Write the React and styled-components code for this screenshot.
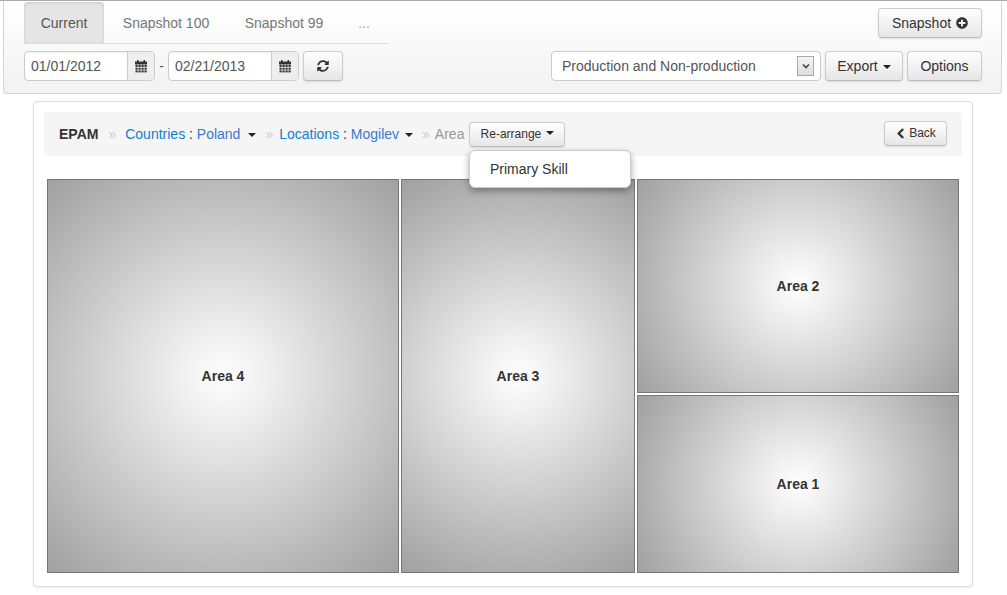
import React from 'react';
import styled, { createGlobalStyle } from 'styled-components';
import { FaSyncAlt, FaPlusCircle, FaChevronLeft } from 'react-icons/fa';

const GlobalStyle = createGlobalStyle`
  html, body {
    margin: 0;
    padding: 0;
    background: #fff;
    font-family: "Liberation Sans", Arial, sans-serif;
    font-size: 14px;
    color: #333;
  }
  * { box-sizing: border-box; }
`;

const Page = styled.div`
  width: 1007px;
  height: 595px;
  overflow: hidden;
  border-top: 1px solid #aaa;
  padding: 0 5px 0 3px;
`;

const Header = styled.header`
  height: 93px;
  border: 1px solid #d4d4d4;
  border-top: 0;
  border-radius: 0 0 4px 4px;
  background: linear-gradient(to bottom, #fff, #f2f2f2);
  padding: 1px 19px 0 20px;
  display: flex;
  flex-direction: column;
`;

const TopRow = styled.div`
  display: flex;
  justify-content: space-between;
  align-items: flex-start;
  height: 49px;
`;

const Tabs = styled.nav`
  display: flex;
  width: 364px;
  height: 42px;
  border-bottom: 1px solid #ddd;
`;

const Tab = styled.a`
  display: flex;
  align-items: center;
  justify-content: center;
  width: ${p => p.$w}px;
  height: 41px;
  color: ${p => (p.$active ? '#555' : '#777')};
  background: ${p => (p.$active ? '#e5e5e5' : 'transparent')};
  box-shadow: ${p => (p.$active ? 'inset 0 1px 3px rgba(0,0,0,.12)' : 'none')};
  border-radius: 4px 4px 0 0;
`;

const Ellipsis = styled(Tab)`
  color: #aaa;
`;

const SnapshotButtonWrap = styled.div`
  margin-top: 6px;
`;

const BottomRow = styled.div`
  display: flex;
  justify-content: space-between;
  align-items: flex-start;
`;

const Group = styled.div`
  display: flex;
  align-items: center;
  gap: ${p => p.$gap ?? 4}px;
`;

const DateBox = styled.div`
  display: flex;
  width: 131px;
  height: 30px;
  border: 1px solid #ccc;
  border-radius: 4px;
  overflow: hidden;
  background: #fff;
  box-shadow: inset 0 1px 1px rgba(0,0,0,.07);
`;

const DateText = styled.div`
  flex: 1;
  padding-left: 6px;
  line-height: 28px;
  color: #555;
`;

const Addon = styled.div`
  width: 27px;
  display: flex;
  align-items: center;
  justify-content: center;
  background: #eee;
  border-left: 1px solid #ccc;
`;

const Dash = styled.span`
  width: 13px;
  text-align: center;
  color: #555;
`;

const Button = styled.button`
  display: inline-flex;
  align-items: center;
  justify-content: center;
  gap: ${p => p.$gap ?? 5}px;
  width: ${p => p.$w}px;
  height: ${p => p.$h ?? 30}px;
  padding: 0;
  border: 1px solid #ccc;
  border-bottom-color: #bbb;
  border-radius: 4px;
  background: linear-gradient(to bottom, #fff, #e6e6e6);
  box-shadow: 0 1px 2px rgba(0,0,0,.1);
  font-family: inherit;
  font-size: ${p => p.$size ?? 14}px;
  color: #333;
`;

const Caret = styled.span`
  display: inline-block;
  width: 0;
  height: 0;
  border-top: 4px solid #222;
  border-left: 4px solid transparent;
  border-right: 4px solid transparent;
  margin-top: ${p => p.$up ?? 1}px;
  margin-left: ${p => p.$left ?? 0}px;
`;

const SelectBox = styled.div`
  width: 270px;
  height: 30px;
  border: 1px solid #ccc;
  border-radius: 4px;
  background: #fff;
  display: flex;
  align-items: center;
  justify-content: space-between;
  padding: 0 2px 0 10px;
  color: #555;
`;

const SelectArrow = styled.span`
  width: 17px;
  height: 20px;
  border: 1px solid #aaa;
  background: linear-gradient(to bottom, #f4f4f4, #ddd);
  display: flex;
  align-items: center;
  justify-content: center;
  margin-right: 4px;
`;

const Panel = styled.main`
  width: 940px;
  height: 486px;
  margin: 7px 0 0 30px;
  border: 1px solid #ddd;
  border-radius: 4px;
  box-shadow: 0 1px 2px rgba(0,0,0,.08);
  padding: 10px;
`;

const Breadcrumb = styled.div`
  position: relative;
  height: 44px;
  background: #f5f5f5;
  border-radius: 4px;
  display: flex;
  align-items: center;
  padding: 0 15px;
`;

const Root = styled.strong`
  color: #333;
`;

const Sep = styled.span`
  color: #ccc;
  margin: 0 ${p => p.$right ?? 10}px 0 ${p => p.$left ?? 10}px;
`;

const Crumb = styled.span`
  color: #333;
  display: inline-flex;
  align-items: center;
  white-space: pre;
`;

const Link = styled.a`
  color: #0f7fd0;
`;

const Value = styled.a`
  color: #3a79d0;
`;

const Current = styled.span`
  color: #999;
  margin-right: 5px;
`;

const BackWrap = styled.div`
  margin: 0 0 2px auto;
`;

const BackIcon = styled(FaChevronLeft)`
  stroke: currentColor;
  stroke-width: 40px;
`;

const Menu = styled.div`
  position: absolute;
  left: 425px;
  top: 38px;
  width: 162px;
  height: 38px;
  background: #fff;
  border: 1px solid #ccc;
  border-radius: 6px;
  box-shadow: 0 3px 7px rgba(0,0,0,.35);
  z-index: 2;
  padding-left: 20px;
  line-height: 36px;
  color: #333;
`;

const Treemap = styled.div`
  display: grid;
  grid-template-columns: 352px 234px 322px;
  grid-template-rows: 214px 178px;
  gap: 2px;
  margin: 23px 0 0 3px;
`;

const Cell = styled.div`
  grid-row: ${p => p.$row};
  grid-column: ${p => p.$col};
  border: 1px solid #777;
  background: radial-gradient(circle farthest-corner at center, #fff 0%, #a0a0a0 100%);
  display: flex;
  align-items: center;
  justify-content: center;
  font-weight: bold;
  color: #333;
`;

function CalendarIcon() {
  const cells = [];
  for (let r = 0; r < 3; r++) {
    for (let c = 0; c < 4; c++) {
      cells.push(<rect key={`${r}-${c}`} x={0.5 + c * 3} y={5 + r * 2.7} width="2.2" height="2" />);
    }
  }
  return (
    <svg width="12" height="13" viewBox="0 0 12 13" fill="#333">
      <rect x="2" y="0" width="1.5" height="2.5" />
      <rect x="8.5" y="0" width="1.5" height="2.5" />
      <rect x="0" y="1.5" width="12" height="3" />
      {cells}
    </svg>
  );
}

export default function App() {
  return (
    <Page>
      <GlobalStyle />
      <Header>
        <TopRow>
          <Tabs>
            <Tab $w={80} $active>Current</Tab>
            <Tab $w={124}>Snapshot 100</Tab>
            <Tab $w={112}>Snapshot 99</Tab>
            <Ellipsis $w={48}>...</Ellipsis>
          </Tabs>
          <SnapshotButtonWrap>
            <Button $w={104}>
              Snapshot <FaPlusCircle size={12} />
            </Button>
          </SnapshotButtonWrap>
        </TopRow>
        <BottomRow>
          <Group>
            <Group $gap={0}>
              <DateBox>
                <DateText>01/01/2012</DateText>
                <Addon><CalendarIcon /></Addon>
              </DateBox>
              <Dash>-</Dash>
              <DateBox>
                <DateText>02/21/2013</DateText>
                <Addon><CalendarIcon /></Addon>
              </DateBox>
            </Group>
            <Button $w={40}><FaSyncAlt size={12} /></Button>
          </Group>
          <Group>
            <SelectBox>
              Production and Non-production
              <SelectArrow>
                <svg width="8" height="6" viewBox="0 0 8 6">
                  <path d="M1 1.5 L4 4.5 L7 1.5" fill="none" stroke="#444" strokeWidth="1.6" />
                </svg>
              </SelectArrow>
            </SelectBox>
            <Button $w={78}>Export <Caret /></Button>
            <Button $w={75}>Options</Button>
          </Group>
        </BottomRow>
      </Header>
      <Panel>
        <Breadcrumb>
          <Root>EPAM</Root>
          <Sep $left={10} $right={9}>»</Sep>
          <Crumb><Link>Countries</Link> : <Value>Poland</Value></Crumb>
          <Caret $left={8} />
          <Sep $left={9} $right={6}>»</Sep>
          <Crumb><Link>Locations</Link> : <Value>Mogilev</Value></Crumb>
          <Caret $left={6} />
          <Sep $left={9} $right={5}>»</Sep>
          <Current>Area</Current>
          <Button $w={96} $h={25} $size={12}>Re-arrange <Caret $up={-2} /></Button>
          <BackWrap>
            <Button $w={63} $h={25} $size={12} $gap={3}><BackIcon size={11} />Back</Button>
          </BackWrap>
          <Menu>Primary Skill</Menu>
        </Breadcrumb>
        <Treemap>
          <Cell $row="1 / 3" $col="1">Area 4</Cell>
          <Cell $row="1 / 3" $col="2">Area 3</Cell>
          <Cell $row="1" $col="3">Area 2</Cell>
          <Cell $row="2" $col="3">Area 1</Cell>
        </Treemap>
      </Panel>
    </Page>
  );
}
